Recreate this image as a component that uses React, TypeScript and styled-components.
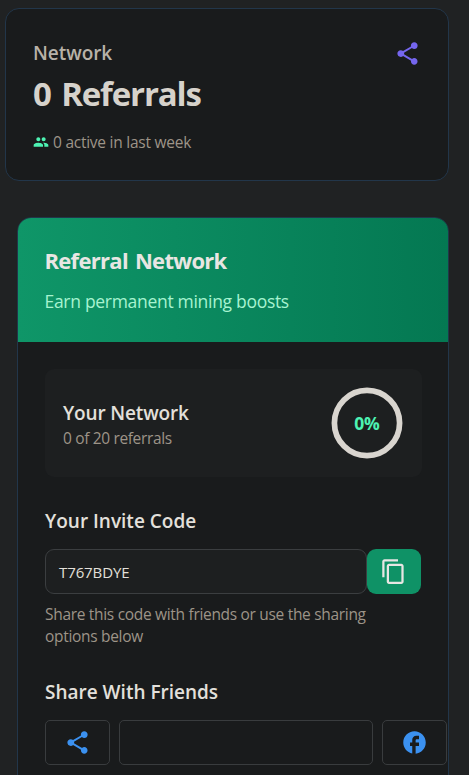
import React from "react";
import styled, { createGlobalStyle } from "styled-components";
import { MdShare, MdPeople, MdContentCopy, MdFacebook } from "react-icons/md";

const GlobalStyle = createGlobalStyle`
  * { box-sizing: border-box; }
  html, body { margin: 0; padding: 0; background: #202223; overflow: hidden; }
  body { font-family: "Open Sans", "Noto Sans", sans-serif; }
  svg { display: block; flex: none; }
`;

const Page = styled.main`
  height: 775px;
  padding: 8px 20px 0 5px;
  overflow: hidden;
  background: #202223;
`;

const StatCard = styled.section`
  display: flex;
  justify-content: space-between;
  height: 173px;
  padding: 31px 27.5px 0 27px;
  border: 1px solid #22364a;
  border-radius: 14px;
  background: #191b1c;
`;

const NetworkCard = styled.section`
  height: 640px;
  margin: 36px 0 0 12px;
  border: 1px solid #22364a;
  border-radius: 14px;
  background: #191b1c;
  overflow: hidden;
`;

const Banner = styled.header`
  height: 124px;
  padding: 26px 26px 0 26.5px;
  background: linear-gradient(to right, #0f9668, #047852);
`;

const Content = styled.div`
  padding: 27px 26px 0 27px;
`;

const Text = styled.div<{
  $size: number;
  $line: number;
  $color: string;
  $weight?: number;
  $spacing?: number;
  $words?: number;
  $gap?: number;
}>`
  margin-top: ${(p) => p.$gap ?? 0}px;
  font-size: ${(p) => p.$size}px;
  line-height: ${(p) => p.$line}px;
  font-weight: ${(p) => p.$weight ?? 400};
  letter-spacing: ${(p) => p.$spacing ?? 0}px;
  word-spacing: ${(p) => p.$words ?? 0}px;
  color: ${(p) => p.$color};
  white-space: nowrap;
`;

const Activity = styled.div`
  display: flex;
  align-items: center;
  gap: 4px;
  margin-top: 15px;
  color: #4df3b3;
`;

const IconSlot = styled.div<{ $color: string }>`
  color: ${(p) => p.$color};
`;

const Progress = styled.div`
  display: flex;
  align-items: center;
  justify-content: space-between;
  height: 108px;
  padding: 2px 19px 0 18px;
  border-radius: 9px;
  background: #1d1f20;
`;

const Ring = styled.div`
  display: grid;
  place-items: center;
  width: 72px;
  height: 72px;
  margin-top: -2px;

  > * {
    grid-area: 1 / 1;
  }
`;

const CodeRow = styled.div`
  display: flex;
  height: 45px;
  margin-top: 14px;
`;

const CodeField = styled.div`
  display: flex;
  align-items: center;
  width: 322px;
  padding-left: 13px;
  border: 1px solid #3b3e40;
  border-radius: 9px;
  background: #1d1f20;
`;

const CopyButton = styled.button`
  display: grid;
  place-items: center;
  width: 54px;
  padding: 0 1px 0 0;
  border: 0;
  border-radius: 9px;
  background: #0f9266;
  color: #e8e6e3;
`;

const ShareRow = styled.div`
  display: grid;
  grid-template-columns: 65px 254px 65px;
  gap: 9px;
  height: 45px;
  margin-top: 14px;
`;

const ShareButton = styled.button`
  display: grid;
  place-items: center;
  padding: 0 1px 0 0;
  border: 1px solid #393c3e;
  border-radius: 5px;
  background: transparent;
  color: #3b91f0;
`;

const light = "#e3e0db";
const muted = "#9d9488";

export default function App() {
  return (
    <>
      <GlobalStyle />
      <Page>
        <StatCard>
          <div>
            <Text $size={19} $line={27} $weight={600} $spacing={-0.05} $color="#b8b2a8">Network</Text>
            <Text $size={33} $line={45} $gap={4} $weight={700} $spacing={-1.15} $words={3} $color="#d6d2cb">0 Referrals</Text>
            <Activity>
              <MdPeople size={16} />
              <Text $size={15.5} $line={22} $spacing={-0.25} $color={muted}>0 active in last week</Text>
            </Activity>
          </div>
          <IconSlot $color="#7566ee"><MdShare size={27} /></IconSlot>
        </StatCard>
        <NetworkCard>
          <Banner>
            <Text $size={22} $line={32} $weight={700} $spacing={-0.7} $words={2} $color="#e8e6e3">Referral Network</Text>
            <Text $size={17.5} $line={27} $gap={12} $spacing={-0.3} $color="#a7f3d0">Earn permanent mining boosts</Text>
          </Banner>
          <Content>
            <Progress>
              <div>
                <Text $size={19} $line={27} $weight={600} $spacing={-0.15} $color={light}>Your Network</Text>
                <Text $size={15.5} $line={22} $spacing={-0.35} $color={muted}>0 of 20 referrals</Text>
              </div>
              <Ring>
                <svg width="72" height="72" viewBox="0 0 72 72" fill="none">
                  <circle cx="36" cy="36" r="32.6" stroke="#d9d5cf" strokeWidth="5.7" />
                </svg>
                <Text $size={17.5} $line={27} $weight={700} $spacing={-0.1} $color="#4df3b3">0%</Text>
              </Ring>
            </Progress>
            <Text $size={19} $line={27} $gap={31} $weight={600} $color={light}>Your Invite Code</Text>
            <CodeRow>
              <CodeField>
                <Text $size={15} $line={22} $spacing={-0.1} $color={light}>T767BDYE</Text>
              </CodeField>
              <CopyButton aria-label="Copy code"><MdContentCopy size={27} /></CopyButton>
            </CodeRow>
            <Text $size={15.5} $line={22} $gap={9} $spacing={-0.31} $color={muted}>
              Share this code with friends or use the sharing
              <br />
              options below
            </Text>
            <Text $size={19} $line={27} $gap={32} $weight={600} $color={light}>Share With Friends</Text>
            <ShareRow>
              <ShareButton aria-label="Share"><MdShare size={27} /></ShareButton>
              <ShareButton />
              <ShareButton aria-label="Facebook"><MdFacebook size={27} /></ShareButton>
            </ShareRow>
          </Content>
        </NetworkCard>
      </Page>
    </>
  );
}
